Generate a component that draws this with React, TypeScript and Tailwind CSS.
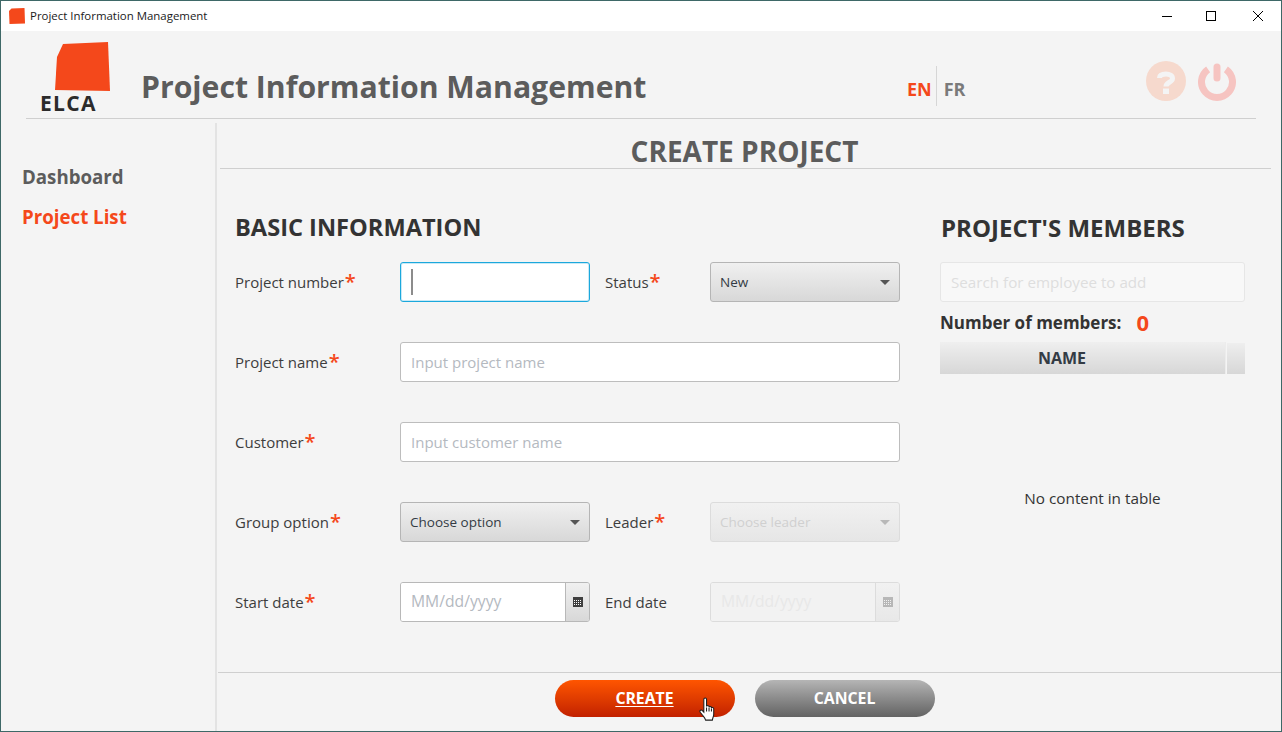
const font = "font-['Open_Sans',sans-serif]";

const Star = () => <span className="relative ml-px text-[20px] leading-[16px] font-semibold text-[#f4481b]">*</span>;

const Label = ({ text, required, className }: { text: string; required?: boolean; className: string }) => (
  <div className={`flex items-center text-[15px] text-[#3d3d3d] ${className}`}>
    {text}
    {required && <Star />}
  </div>
);

const CalendarIcon = ({ disabled }: { disabled?: boolean }) => (
  <svg width="10" height="10" viewBox="0 0 10 10" className={disabled ? "opacity-30" : ""}>
    <rect width="10" height="10" fill="#3f3f3f" />
    <path d="M1 3h1v1H1zM3 3h1v1H3zM5 3h1v1H5zM7 3h1v1H7zM1 5h1v1H1zM3 5h1v1H3zM5 5h1v1H5zM7 5h1v1H7zM1 7h1v1H1zM3 7h1v1H3zM5 7h1v1H5zM7 7h1v1H7z" fill="#fff" />
  </svg>
);

const Select = ({ text, width, disabled }: { text: string; width: string; disabled?: boolean }) => (
  <div
    className={`flex h-10 items-center justify-between rounded-[3px] border pl-[9px] pr-[9px] text-[13.5px] ${width} ${
      disabled
        ? "border-[#dcdcdc] bg-gradient-to-b from-[#f1f1f1] to-[#e6e6e6] text-[#d0d0d0]"
        : "border-[#b5b5b5] bg-gradient-to-b from-[#f0f0f0] to-[#d8d8d8] text-[#333b44]"
    }`}
  >
    {text}
    <span className={`h-0 w-0 border-x-[5px] border-t-[5px] border-x-transparent ${disabled ? "border-t-[#b8b8b8]" : "border-t-[#555555]"}`} />
  </div>
);

const TextInput = ({ placeholder }: { placeholder: string }) => (
  <div className="flex h-10 w-[500px] items-center rounded-[3px] border border-[#bdbdbd] bg-white pl-[10px] text-[15px] text-[#b4b9bf]">
    {placeholder}
  </div>
);

const DateInput = ({ disabled }: { disabled?: boolean }) => (
  <div className={`flex h-10 w-[190px] overflow-hidden rounded-[3px] border ${disabled ? "border-[#dcdcdc]" : "border-[#b8b8b8]"}`}>
    <div className={`flex flex-1 items-center pl-[10px] text-[15.7px] ${disabled ? "bg-[#f2f2f2] text-[#e8e8e8]" : "bg-white text-[#b4b9bf]"}`}>
      MM/dd/yyyy
    </div>
    <div
      className={`flex w-6 items-center justify-center border-l ${
        disabled ? "border-[#dcdcdc] bg-gradient-to-b from-[#f1f1f1] to-[#e8e8e8]" : "border-[#b8b8b8] bg-gradient-to-b from-[#f0f0f0] to-[#d8d8d8]"
      }`}
    >
      <CalendarIcon disabled={disabled} />
    </div>
  </div>
);

const HandCursor = () => (
  <svg width="18" height="25" viewBox="0 0 17 24" className="absolute left-[144px] top-[17px]">
    <path
      d="M4.5 2.2c0-1.6 2.6-1.6 2.6 0v7c0-1.3 2.4-1.3 2.4 0v.8c0-1.2 2.3-1.2 2.3 0v.8c0-1.1 2.2-1.1 2.2.2v5.5c0 2.3-1 3.2-1.3 5.7H6.2c-.6-2-1.6-3-2.7-4.4L1 14.6c-1-1.5.9-2.9 2.1-1.6l1.4 1.5z"
      fill="#fff"
      stroke="#1d1d1d"
      strokeWidth="1"
    />
    <path d="M7.1 10v4M9.5 10.5V14M11.8 11v3" stroke="#1d1d1d" strokeWidth="1" fill="none" />
  </svg>
);

export default function App() {
  return (
    <div className={`flex h-[732px] w-[1282px] flex-col overflow-hidden border border-[#3e6867] bg-[#f4f4f4] ${font}`}>
      {/* title bar */}
      <div className="flex h-[30px] shrink-0 items-center bg-white pl-2">
        <svg width="16" height="16" viewBox="0 0 16 16">
          <path d="M2.5.5 15.5 0 16 15.5.5 16 0 3z" fill="#f4481b" />
        </svg>
        <span className="ml-[5px] text-[11.45px] text-[#1a1a1a]">Project Information Management</span>
        <div className="ml-auto flex items-center">
          <svg width="46" height="12" viewBox="0 0 46 12">
            <path d="M19 6.5h10" stroke="#000" strokeWidth="1" />
          </svg>
          <svg width="46" height="12" viewBox="0 0 46 12">
            <rect x="17.5" y="1.5" width="9" height="9" fill="none" stroke="#000" strokeWidth="1" />
          </svg>
          <svg width="46" height="12" viewBox="0 0 46 12">
            <path d="M18 1l10 10M28 1 18 11" stroke="#000" strokeWidth="1" />
          </svg>
        </div>
      </div>

      {/* header */}
      <div className="mx-[25px] flex h-[88px] shrink-0 items-start border-b border-[#cfcfcf]">
        <div className="relative ml-[14px] mt-[10px] w-[60px]">
          <svg width="56" height="50" viewBox="0 0 56 50" className="ml-[15px]">
            <path d="M8 3 53 1 55 50 0 49 2 16z" fill="#f4481b" />
          </svg>
          <div className="mt-px whitespace-nowrap text-[21px] leading-[22px] font-bold tracking-[1.3px] text-[#2b2b2b]">ELCA</div>
        </div>
        <div className="ml-[41px] mt-[35px] w-[505px] whitespace-nowrap text-[30.2px] leading-[42px] font-bold text-[#5c5c5c]">Project Information Management</div>
        <div className="ml-[261px] mt-[35px] flex h-10 w-[60px] items-center text-[18px] font-bold">
          <span className="pt-[6px] text-[#f4481b]">EN</span>
          <span className="ml-1 mr-[5px] h-10 w-px bg-[#d6d6d6]" />
          <span className="ml-[2px] pt-[6px] text-[#7a7a7a]">FR</span>
        </div>
        <div className="ml-[179px] mt-[30px] flex items-center gap-[12px]">
          <svg width="40" height="40" viewBox="0 0 40 40">
            <circle cx="20" cy="20" r="20" fill="#f6d9cd" />
            <path d="M13.5 17c0-3.5 3-4 6.5-4s6.5 1.5 6.5 4.5c0 4-6.5 3.5-6.5 8" fill="none" stroke="#f4f4f4" strokeWidth="5" />
            <rect x="17" y="27.5" width="6" height="5.5" fill="#f4f4f4" />
          </svg>
          <svg width="38" height="40" viewBox="0 0 38 40">
            <path d="M10.1 8.3A15.5 15.5 0 1 0 27.9 8.3" fill="none" stroke="#f6c4c1" strokeWidth="7" />
            <path d="M19 6v11" stroke="#f6c4c1" strokeWidth="7" strokeLinecap="round" />
          </svg>
        </div>
      </div>

      <div className="flex min-h-0 flex-1">
        {/* sidebar */}
        <aside className="mt-1 flex w-[216px] shrink-0 flex-col gap-[12px] border-r-2 border-[#e3e3e3] pl-[21px] pt-10 text-[18.7px] leading-[28px] font-bold">
          <div className="text-[#5c5c5c]">Dashboard</div>
          <div className="text-[#f4481b]">Project List</div>
        </aside>

        <main className="flex min-w-0 flex-1 flex-col">
          <div className="ml-[3px] mr-[10px] flex h-[50px] shrink-0 items-start justify-center border-b border-[#cfcfcf] pr-[2px] pt-3 text-[28px] leading-[40px] font-bold text-[#5c5c5c]">
            <span>CREATE PROJECT</span>
          </div>

          <div className="flex flex-1">
            {/* form */}
            <section className="ml-[18px] w-[665px]">
              <h2 className="mt-[42px] text-[23.6px] leading-[32px] font-bold text-[#333333]">BASIC INFORMATION</h2>
              <div className="mt-[19px] flex flex-col gap-10">
                <div className="flex">
                  <Label text="Project number" required className="h-10 w-[165px]" />
                  <div className="flex h-10 w-[190px] items-center rounded-[3px] border border-[#1ba8dc] bg-white pl-[10px] shadow-[inset_0_0_0_1px_#c8e9f6]">
                    <span className="h-[26px] w-[2px] bg-[#8c8c8c]" />
                  </div>
                  <Label text="Status" required className="ml-[15px] h-10 w-[105px]" />
                  <Select text="New" width="w-[190px]" />
                </div>
                <div className="flex">
                  <Label text="Project name" required className="h-10 w-[165px]" />
                  <TextInput placeholder="Input project name" />
                </div>
                <div className="flex">
                  <Label text="Customer" required className="h-10 w-[165px]" />
                  <TextInput placeholder="Input customer name" />
                </div>
                <div className="flex">
                  <Label text="Group option" required className="h-10 w-[165px]" />
                  <Select text="Choose option" width="w-[190px]" />
                  <Label text="Leader" required className="ml-[15px] h-10 w-[105px]" />
                  <Select text="Choose leader" width="w-[190px]" disabled />
                </div>
                <div className="flex">
                  <Label text="Start date" required className="h-10 w-[165px]" />
                  <DateInput />
                  <Label text="End date" className="ml-[15px] h-10 w-[105px]" />
                  <DateInput disabled />
                </div>
              </div>
            </section>

            {/* members */}
            <section className="ml-[40px] w-[305px]">
              <h2 className="mt-[43px] ml-px whitespace-nowrap text-[24px] leading-[32px] font-bold text-[#333333]">PROJECT'S MEMBERS</h2>
              <div className="mt-[18px] flex h-10 items-center rounded-[3px] border border-[#e6e6e6] bg-[#f8f8f8] pl-[10px] text-[15.2px] text-[#dedede]">
                Search for employee to add
              </div>
              <div className="mt-[6px] flex h-[30px] items-center text-[17px] font-bold text-[#333333]">
                Number of members:
                <span className="ml-[15px] pb-[2px] text-[22px] text-[#f4481b]">0</span>
              </div>
              <div className="mt-1 flex h-8 bg-gradient-to-b from-[#efefef] to-[#d7d7d7]">
                <div className="flex w-[286px] items-center justify-center border-r border-[#ececec] pr-[41px] text-[16px] font-bold text-[#333b44]">NAME</div>
                <div className="flex-1 border-t border-l border-[#f4f4f4]" />
              </div>
              <div className="mt-[113px] text-center text-[15.3px] text-[#333333]">No content in table</div>
            </section>
          </div>

          {/* actions */}
          <div className="ml-px flex h-[59px] shrink-0 items-start justify-center gap-5 border-t border-[#cfcfcf] pt-[7px]">
            <div className="relative ml-[-10px] flex h-[37px] w-[180px] items-center justify-center rounded-full bg-gradient-to-b from-[#ff5500] to-[#c22000] text-[15.8px] font-bold text-white underline underline-offset-2">
              CREATE
              <HandCursor />
            </div>
            <div className="flex h-[37px] w-[180px] items-center justify-center rounded-full bg-gradient-to-b from-[#b5b5b5] to-[#636363] text-[15.8px] font-bold text-white">
              CANCEL
            </div>
          </div>
        </main>
      </div>
    </div>
  );
}
